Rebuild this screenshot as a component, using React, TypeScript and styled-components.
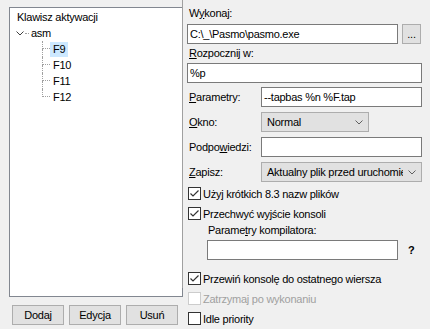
import React from 'react';
import styled, { createGlobalStyle } from 'styled-components';

const GlobalStyle = createGlobalStyle`
  body {
    margin: 0;
    font-family: "Liberation Sans", Arial, sans-serif;
    font-size: 11px;
    color: #000;
  }
`;

const Window = styled.div`
  width: 430px;
  height: 329px;
  background: #f0f0f0;
  display: flex;
  overflow: hidden;
  letter-spacing: -0.25px;
`;

const LeftColumn = styled.div`
  flex: none;
  width: 183px;
  padding: 7px 0 0 9px;
  box-sizing: border-box;
  display: flex;
  flex-direction: column;
`;

const TreeBox = styled.div`
  width: 174px;
  height: 290px;
  box-sizing: border-box;
  border: 1px solid #828790;
  background: #fff;
`;

const TreeHeader = styled.div`
  height: 16px;
  line-height: 16px;
  margin-top: 1px;
  padding-left: 7px;
`;

const RootNode = styled.div`
  height: 16px;
  display: flex;
  align-items: center;
  padding-left: 6px;
`;

const Stub = styled.span`
  width: 4px;
  height: 0;
  margin: 0 2px 0 1px;
  border-top: 1px dotted #a0a0a0;
`;

const ChildNode = styled.div`
  height: 16px;
  display: flex;
  align-items: stretch;
  padding-left: 32px;
`;

const Connector = styled.span<{ $last?: boolean }>`
  width: 8px;
  display: flex;
  flex-direction: column;
  &::before {
    content: '';
    height: 8px;
    border-left: 1px dotted #a0a0a0;
    border-bottom: 1px dotted #a0a0a0;
    box-sizing: border-box;
  }
  &::after {
    content: '';
    flex: 1;
    border-left: ${(p) => (p.$last ? 'none' : '1px dotted #a0a0a0')};
  }
`;

const NodeLabel = styled.span<{ $selected?: boolean }>`
  align-self: center;
  height: 15px;
  line-height: 15px;
  padding: 0 3px;
  background: ${(p) => (p.$selected ? '#cce8ff' : 'transparent')};
`;

const ButtonRow = styled.div`
  display: flex;
  gap: 5px;
  margin-top: 8px;
  padding-left: 3px;
`;

const PushButton = styled.div<{ $w?: number }>`
  width: ${(p) => p.$w ?? 52}px;
  height: 20px;
  box-sizing: border-box;
  border: 1px solid #adadad;
  background: #e1e1e1;
  display: flex;
  align-items: center;
  justify-content: center;
  flex: none;
`;

const RightPanel = styled.div`
  flex: 1;
  margin-left: -1px;
  height: 288px;
  border-left: 1px solid #a0a0a0;
  padding: 0 8px 0 4px;
  display: flex;
  flex-direction: column;
`;

const Caption = styled.div<{ $mt: number; $indent?: number }>`
  height: 16px;
  line-height: 16px;
  margin-top: ${(p) => p.$mt}px;
  padding-left: ${(p) => p.$indent ?? 2}px;
  flex: none;
`;

const Acc = styled.span`
  text-decoration: underline;
`;

const Row = styled.div<{ $mt: number; $indent?: number }>`
  display: flex;
  align-items: center;
  margin-top: ${(p) => p.$mt}px;
  margin-left: ${(p) => p.$indent ?? 0}px;
  flex: none;
`;

const RowLabel = styled.span`
  width: 74px;
  padding-left: 2px;
  box-sizing: border-box;
  flex: none;
`;

const Edit = styled.div<{ $w: number }>`
  width: ${(p) => p.$w}px;
  height: 20px;
  box-sizing: border-box;
  border: 1px solid #7a7a7a;
  background: #fff;
  padding-left: 2px;
  line-height: 18px;
  white-space: nowrap;
  overflow: hidden;
  flex: none;
`;

const Combo = styled.div<{ $w: number }>`
  width: ${(p) => p.$w}px;
  height: 20px;
  box-sizing: border-box;
  border: 1px solid #adadad;
  background: #e1e1e1;
  display: flex;
  align-items: center;
  flex: none;
`;

const ComboText = styled.span`
  flex: 1;
  padding-left: 5px;
  white-space: nowrap;
  overflow: hidden;
`;

const ComboArrow = styled.span`
  width: 18px;
  display: flex;
  justify-content: center;
  flex: none;
`;

const Help = styled.span`
  margin-left: 10px;
  font-weight: bold;
`;

const CheckRow = styled.div<{ $mt: number; $disabled?: boolean }>`
  display: flex;
  align-items: center;
  height: 13px;
  margin-top: ${(p) => p.$mt}px;
  margin-left: 1px;
  gap: 2px;
  color: ${(p) => (p.$disabled ? '#a0a0a0' : '#000')};
  white-space: nowrap;
  flex: none;
`;

const Box = styled.span<{ $disabled?: boolean }>`
  width: 13px;
  height: 13px;
  box-sizing: border-box;
  border: 1px solid ${(p) => (p.$disabled ? '#cccccc' : '#333333')};
  background: #fff;
  display: flex;
  align-items: center;
  justify-content: center;
  flex: none;
`;

const Chevron = ({ color = '#606060' }: { color?: string }) => (
  <svg width="8" height="5" viewBox="0 0 8 5">
    <polyline points="0.5,0.5 4,4 7.5,0.5" fill="none" stroke={color} strokeWidth="1" />
  </svg>
);

const CheckBox = ({ label, checked, disabled, mt }: { label: string; checked?: boolean; disabled?: boolean; mt: number }) => (
  <CheckRow $mt={mt} $disabled={disabled}>
    <Box $disabled={disabled}>
      {checked && (
        <svg width="11" height="11" viewBox="0 0 11 11">
          <polyline points="1.5,5.5 4,8 9.5,2.5" fill="none" stroke="#333" strokeWidth="1.2" />
        </svg>
      )}
    </Box>
    <span>{label}</span>
  </CheckRow>
);

const keys = ['F9', 'F10', 'F11', 'F12'];

const App: React.FC = () => {
  return (
    <>
      <GlobalStyle />
      <Window>
        <LeftColumn>
          <TreeBox>
            <TreeHeader>Klawisz aktywacji</TreeHeader>
            <RootNode>
              <Chevron color="#404040" />
              <Stub />
              <span>asm</span>
            </RootNode>
            {keys.map((k, i) => (
              <ChildNode key={k}>
                <Connector $last={i === keys.length - 1} />
                <NodeLabel $selected={i === 0}>{k}</NodeLabel>
              </ChildNode>
            ))}
          </TreeBox>
          <ButtonRow>
            <PushButton>Dodaj</PushButton>
            <PushButton>Edycja</PushButton>
            <PushButton>Usuń</PushButton>
          </ButtonRow>
        </LeftColumn>

        <RightPanel>
          <Caption $mt={5}>
            W<Acc>y</Acc>konaj:
          </Caption>
          <Row $mt={3}>
            <Edit $w={211}>C:\_\Pasmo\pasmo.exe</Edit>
            <PushButton $w={19} style={{ marginLeft: 4 }}>
              ...
            </PushButton>
          </Row>
          <Caption $mt={1}>
            <Acc>R</Acc>ozpocznij w:
          </Caption>
          <Row $mt={2}>
            <Edit $w={235}>%p</Edit>
          </Row>

          <Row $mt={4}>
            <RowLabel>
              <Acc>P</Acc>arametry:
            </RowLabel>
            <Edit $w={161}>--tapbas %n %F.tap</Edit>
          </Row>
          <Row $mt={5}>
            <RowLabel>
              <Acc>O</Acc>kno:
            </RowLabel>
            <Combo $w={108}>
              <ComboText>Normal</ComboText>
              <ComboArrow>
                <Chevron />
              </ComboArrow>
            </Combo>
          </Row>
          <Row $mt={5}>
            <RowLabel>
              Podpo<Acc>w</Acc>iedzi:
            </RowLabel>
            <Edit $w={161} />
          </Row>
          <Row $mt={5}>
            <RowLabel>
              <Acc>Z</Acc>apisz:
            </RowLabel>
            <Combo $w={161}>
              <ComboText>Aktualny plik przed uruchomieniem</ComboText>
              <ComboArrow>
                <Chevron />
              </ComboArrow>
            </Combo>
          </Row>

          <CheckBox mt={5} checked label="Użyj krótkich 8.3 nazw plików" />
          <CheckBox mt={7} checked label="Przechwyć wyjście konsoli" />
          <Caption $mt={2} $indent={21}>
            Parame<Acc>t</Acc>ry kompilatora:
          </Caption>
          <Row $mt={2} $indent={20}>
            <Edit $w={191} />
            <Help>?</Help>
          </Row>
          <CheckBox mt={12} checked label="Przewiń konsolę do ostatnego wiersza" />
          <CheckBox mt={7} disabled label="Zatrzymaj po wykonaniu" />
          <CheckBox mt={7} label="Idle priority" />
        </RightPanel>
      </Window>
    </>
  );
};

export default App;
